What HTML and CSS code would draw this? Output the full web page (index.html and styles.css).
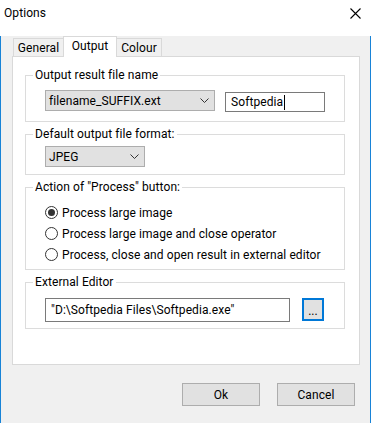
FILE: index.html
```html
<!DOCTYPE html>
<html>
<head>
<meta charset="utf-8">
<link rel="stylesheet" href="styles.css">
</head>
<body>
<div class="titlebar">
  <span class="title">Options</span>
  <svg class="close" width="11" height="11" viewBox="0 0 11 11"><path d="M0.5 0.5 L10.5 10.5 M10.5 0.5 L0.5 10.5" stroke="#000" stroke-width="1.1" fill="none"/></svg>
</div>
<div class="client">
  <div class="tabs">
    <div class="tab t-general">General</div>
    <div class="tab sel">Output</div>
    <div class="tab t-colour">Colour</div>
  </div>
  <div class="panel">
    <fieldset class="group">
      <legend>Output result file name</legend>
      <div class="gbody g1">
        <div class="combo wide"><span>filename_SUFFIX.ext</span><svg width="9" height="5" viewBox="0 0 9 5"><path d="M0.5 0.5 L4.5 4.5 L8.5 0.5" stroke="#333" fill="none"/></svg></div>
        <div class="textbox small"><span>Softpedia</span><span class="caret"></span></div>
      </div>
    </fieldset>
    <fieldset class="group">
      <legend>Default output file format:</legend>
      <div class="gbody g2">
        <div class="combo narrow"><span>JPEG</span><svg width="9" height="5" viewBox="0 0 9 5"><path d="M0.5 0.5 L4.5 4.5 L8.5 0.5" stroke="#333" fill="none"/></svg></div>
      </div>
    </fieldset>
    <fieldset class="group">
      <legend>Action of "Process" button:</legend>
      <div class="gbody g3">
        <div class="radio-row"><span class="radio on"></span><span>Process large image</span></div>
        <div class="radio-row"><span class="radio"></span><span>Process large image and close operator</span></div>
        <div class="radio-row"><span class="radio"></span><span>Process, close and open result in external editor</span></div>
      </div>
    </fieldset>
    <fieldset class="group">
      <legend>External Editor</legend>
      <div class="gbody g4">
        <div class="textbox path">"D:\Softpedia Files\Softpedia.exe"</div>
        <div class="browse">...</div>
      </div>
    </fieldset>
  </div>
  <div class="buttons">
    <div class="btn">Ok</div>
    <div class="btn">Cancel</div>
  </div>
</div>
</body>
</html>
```

FILE: styles.css
```css
* { box-sizing: border-box; }
html, body { margin: 0; padding: 0; }
body {
  width: 371px;
  height: 423px;
  overflow: hidden;
  font-family: Roboto, "Noto Sans", sans-serif;
  font-size: 12px;
  letter-spacing: 0.08px;
  color: #000;
  background: #fff;
}
.titlebar {
  height: 26px;
  background: #fff;
  display: flex;
  align-items: center;
  justify-content: space-between;
  padding: 0 10px 0 4px;
}
.title { font-size: 12px; line-height: 16px; }
.close { display: block; margin-top: 1px; }
.client {
  height: 397px;
  background: #f0f0f0;
  border: 1px solid #1883d7;
  border-top: none;
}
.tabs {
  display: flex;
  align-items: flex-end;
  height: 20px;
  margin: 10px 0 0 12px;
}
.tab {
  height: 18px;
  border: 1px solid #d9d9d9;
  border-bottom: none;
  background: #f0f0f0;
  display: flex;
  align-items: center;
  justify-content: center;
  line-height: 16px;
  padding-top: 1px;
}
.t-general { width: 50px; border-right: none; }
.t-colour { width: 45px; border-left: none; }
.tab.sel {
  width: 54px;
  height: 21px;
  margin-bottom: -1px;
  background: #fff;
  position: relative;
  z-index: 1;
  padding-top: 0;
  padding-bottom: 3px;
}
.panel {
  margin-left: 11px;
  width: 348px;
  height: 309px;
  background: #fff;
  border: 1px solid #d9d9d9;
  padding: 10px 0 0 12px;
}
.group {
  margin: 0 0 4px 0;
  padding: 0;
  width: 320px;
  border: 1px solid #dcdcdc;
  min-inline-size: 0;
}
.group legend {
  margin-left: 7px;
  padding: 0 2px;
  line-height: 16px;
  font-size: 12px;
}
.gbody { padding-left: 19px; }
.g1 { display: flex; align-items: flex-start; padding-top: 7px; padding-bottom: 9px; }
.g2 { padding-top: 4px; padding-bottom: 7px; }
.g3 { padding-top: 7px; padding-bottom: 4px; }
.g4 { display: flex; align-items: flex-start; padding-top: 8px; padding-bottom: 6px; }
.combo {
  height: 21px;
  background: #e1e1e1;
  border: 1px solid #adadad;
  display: flex;
  align-items: center;
  justify-content: space-between;
  padding: 0 5px 0 3px;
}
.combo svg { display: block; }
.combo.wide { width: 170px; }
.combo.narrow { width: 100px; }
.textbox {
  background: #fff;
  border: 1px solid #7a7a7a;
  display: flex;
  align-items: center;
}
.textbox.small {
  width: 100px;
  height: 20px;
  margin: 2px 0 0 10px;
  padding-left: 5px;
}
.caret {
  display: inline-block;
  width: 1px;
  height: 15px;
  background: #000;
  margin-left: 1px;
}
.radio-row {
  height: 21px;
  display: flex;
  align-items: center;
}
.radio {
  width: 13px;
  height: 13px;
  border: 1px solid #333;
  border-radius: 50%;
  margin-right: 4px;
  display: flex;
  align-items: center;
  justify-content: center;
  background: #fff;
}
.radio.on::after {
  content: "";
  width: 7px;
  height: 7px;
  border-radius: 50%;
  background: #333;
}
.textbox.path {
  width: 245px;
  height: 24px;
  padding-left: 5px;
}
.browse {
  width: 22px;
  height: 23px;
  margin-left: 12px;
  border: 2px solid #0078d7;
  background: #e1e1e1;
  display: flex;
  align-items: center;
  justify-content: center;
  line-height: 14px;
  padding-top: 2px;
}
.buttons {
  display: flex;
  justify-content: flex-end;
  gap: 17px;
  margin-top: 18px;
  padding-right: 15px;
}
.btn {
  width: 78px;
  height: 23px;
  background: #e1e1e1;
  border: 1px solid #adadad;
  display: flex;
  align-items: center;
  justify-content: center;
}
```
